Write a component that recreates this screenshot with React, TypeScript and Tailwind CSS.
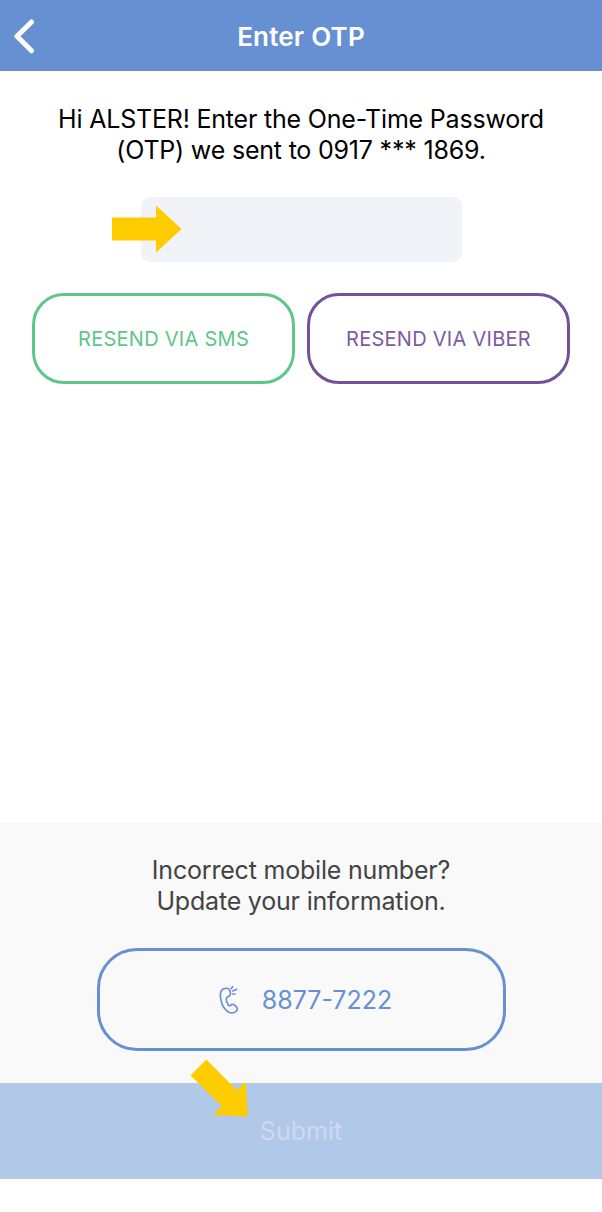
import { useState } from 'react'

const RESEND_OPTIONS = [
  { label: 'RESEND VIA SMS', className: 'border-[#5fc68a] text-[#5fc68a]' },
  { label: 'RESEND VIA VIBER', className: 'border-[#73509b] text-[#7b5ba3]' },
]

function IconBack() {
  return (
    <svg className="w-6 h-9" viewBox="0 0 24 36" fill="none" stroke="currentColor" strokeWidth={5} strokeLinecap="round" strokeLinejoin="round">
      <path d="M19.5 4L5 18.2l14.5 14.6" />
    </svg>
  )
}

function IconPhone() {
  return (
    <svg className="w-5 h-[30px]" viewBox="0 0 60 90" fill="none" stroke="currentColor" strokeWidth={5} strokeLinecap="round" strokeLinejoin="round">
      <path d="M24 37c7-3 12-7 10-15C32 12 25 9 19 10C9 11 4 18 4 31c1 18 8 36 18 45c9 9 21 10 29 3c5-4 5-10 0-15c-6-6-10-9-16-3c-3 2-5 2-7-1c-3-5-6-10-6-15c0-5 0-7 2-8z" />
      <path d="M36 11l5-6M41 18l12-5M41 27h7" />
    </svg>
  )
}

export default function App() {
  const [code, setCode] = useState('')

  return (
    <div className="flex flex-col w-full h-[1212px] bg-white font-[Inter,sans-serif] text-black">
      <header className="relative flex items-center justify-center h-[71px] shrink-0 pt-[3px] bg-[#6790d3] text-white">
        <button type="button" aria-label="Back" className="absolute left-3 top-[18px]">
          <IconBack />
        </button>
        <h1 className="text-[26px] leading-8 font-semibold tracking-[0.2px]">Enter OTP</h1>
      </header>

      <main className="flex flex-col items-center h-[752px] shrink-0 pt-[33px]">
        <p className="text-center text-[25px] leading-[31px] tracking-[-0.2px] whitespace-nowrap">
          Hi ALSTER! Enter the One-Time Password
          <br />
          (OTP) we sent to 0917 *** 1869.
        </p>

        <div className="relative mt-[31px]">
          <input
            type="text"
            inputMode="numeric"
            aria-label="One-Time Password"
            value={code}
            onChange={e => setCode(e.target.value)}
            className="block w-[321px] h-[65px] rounded-[9px] bg-[#f2f3f9] text-center text-[25px] outline-none"
          />
          <svg className="absolute -left-[29px] top-2 w-[70px] h-12" viewBox="0 0 70 48" fill="#ffcc00">
            <path d="M0 12.5h44V0.5l25.5 23.5L44 47.5V35.5H0z" />
          </svg>
        </div>

        <div className="flex gap-3 mt-[31px]">
          {RESEND_OPTIONS.map(o => (
            <button
              key={o.label}
              type="button"
              className={`w-[263px] h-[91px] border-[3px] rounded-[32px] text-[20px] tracking-[0.27px] ${o.className}`}
            >
              {o.label}
            </button>
          ))}
        </div>
      </main>

      <section className="flex flex-col items-center h-[260px] shrink-0 pt-8 bg-[#f9f9f9]">
        <p className="text-center text-[25px] leading-[31px] tracking-[-0.2px] text-[#434343]">
          Incorrect mobile number?
          <br />
          Update your information.
        </p>
        <button
          type="button"
          className="flex items-center justify-center gap-[23px] w-[409px] h-[103px] mt-[31px] pl-[9px] border-[3px] border-[#6790d3] rounded-[40px] text-[25px] text-[#6790d3]"
        >
          <IconPhone />
          <span className="pt-0.5">8877-7222</span>
        </button>
      </section>

      <footer className="relative h-24 shrink-0">
        <button type="button" disabled className="w-full h-full pt-0.5 bg-[#b2c8e9] text-[25px] text-[#ccdaf3]">
          Submit
        </button>
        <svg className="absolute left-[190px] -top-6 w-[60px] h-[60px]" viewBox="0 0 60 60" fill="#ffcc00">
          <path d="M16.3 0.5L47 31.3l8.7-8.5l2 34.8l-34.7-1.8l9-8.5L0.5 16.5z" />
        </svg>
      </footer>
    </div>
  )
}
